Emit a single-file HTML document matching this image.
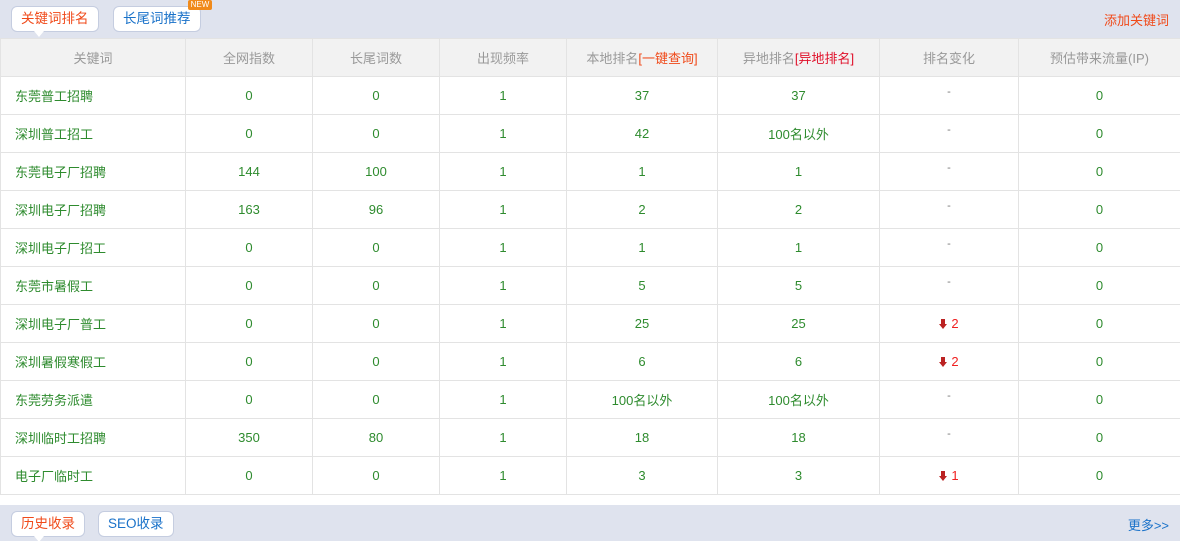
<!DOCTYPE html>
<html><head><meta charset="utf-8"><style>
*{margin:0;padding:0;box-sizing:border-box}
body{width:1180px;height:541px;background:#fff;font-family:"Liberation Sans","Noto Sans CJK SC",sans-serif;font-size:13px;position:relative;overflow:hidden}
.bar{position:absolute;left:0;width:1180px;background:#dfe3ee}
.tab{position:absolute;height:26px;line-height:24px;border:1px solid #c5cde0;border-radius:6px;background:#fff;padding:0 9px;font-size:13.5px}
.tab.on{color:#f04a1a}
.tab.on:after{content:"";position:absolute;left:22px;bottom:-6px;border-left:5px solid transparent;border-right:5px solid transparent;border-top:6px solid #fff}
.blue{color:#1a72c9}
table{position:absolute;left:0;top:38px;width:1180px;border-collapse:collapse;table-layout:fixed}
td,th{border:1px solid #e3e3e3;height:38px;text-align:center;color:#2e8b2e;font-weight:normal}
th{background:#f2f2f2;color:#999}
td:first-child{text-align:left;padding-left:14px}
.r{color:#f02020}
.ar{display:inline-block;position:relative;width:8px;height:10px;margin-right:4px;vertical-align:-1px}
.ar:before{content:"";position:absolute;left:2px;top:0;width:4px;height:5px;background:#b22}
.ar:after{content:"";position:absolute;left:0;top:5px;border-left:4px solid transparent;border-right:4px solid transparent;border-top:5px solid #b22}
.dash{color:#777;font-size:11px;vertical-align:top;padding-top:9px}
</style></head><body>
<div class="bar" style="top:0;height:38px"></div>
<div class="tab on" style="left:11px;top:6px">关键词排名</div>
<div class="tab blue" style="left:113px;top:6px">长尾词推荐</div>
<div style="position:absolute;left:188px;top:0;width:24px;height:10px;background:#f08a1a;color:#fff;font-size:8px;line-height:10px;text-align:center;border-radius:2px">NEW</div>
<div style="position:absolute;right:11px;top:10px;color:#f04a1a;font-size:13px">添加关键词</div>
<table>
<colgroup><col style="width:185px"><col style="width:127px"><col style="width:127px"><col style="width:127px"><col style="width:151px"><col style="width:162px"><col style="width:139px"><col style="width:162px"></colgroup>
<tr><th>关键词</th><th>全网指数</th><th>长尾词数</th><th>出现频率</th><th>本地排名<span style="color:#f04a1a">[一键查询]</span></th><th>异地排名<span style="color:#e0102a">[异地排名]</span></th><th>排名变化</th><th>预估带来流量(IP)</th></tr>
<tr><td>东莞普工招聘</td><td>0</td><td>0</td><td>1</td><td>37</td><td>37</td><td class="dash">-</td><td>0</td></tr>
<tr><td>深圳普工招工</td><td>0</td><td>0</td><td>1</td><td>42</td><td>100名以外</td><td class="dash">-</td><td>0</td></tr>
<tr><td>东莞电子厂招聘</td><td>144</td><td>100</td><td>1</td><td>1</td><td>1</td><td class="dash">-</td><td>0</td></tr>
<tr><td>深圳电子厂招聘</td><td>163</td><td>96</td><td>1</td><td>2</td><td>2</td><td class="dash">-</td><td>0</td></tr>
<tr><td>深圳电子厂招工</td><td>0</td><td>0</td><td>1</td><td>1</td><td>1</td><td class="dash">-</td><td>0</td></tr>
<tr><td>东莞市暑假工</td><td>0</td><td>0</td><td>1</td><td>5</td><td>5</td><td class="dash">-</td><td>0</td></tr>
<tr><td>深圳电子厂普工</td><td>0</td><td>0</td><td>1</td><td>25</td><td>25</td><td class="r"><span class="ar"></span>2</td><td>0</td></tr>
<tr><td>深圳暑假寒假工</td><td>0</td><td>0</td><td>1</td><td>6</td><td>6</td><td class="r"><span class="ar"></span>2</td><td>0</td></tr>
<tr><td>东莞劳务派遣</td><td>0</td><td>0</td><td>1</td><td>100名以外</td><td>100名以外</td><td class="dash">-</td><td>0</td></tr>
<tr><td>深圳临时工招聘</td><td>350</td><td>80</td><td>1</td><td>18</td><td>18</td><td class="dash">-</td><td>0</td></tr>
<tr><td>电子厂临时工</td><td>0</td><td>0</td><td>1</td><td>3</td><td>3</td><td class="r"><span class="ar"></span>1</td><td>0</td></tr>
</table>
<div class="bar" style="top:505px;height:36px"></div>
<div class="tab on" style="left:11px;top:511px">历史收录</div>
<div class="tab blue" style="left:98px;top:511px">SEO收录</div>
<div class="blue" style="position:absolute;right:11px;top:515px;font-size:13px">更多&gt;&gt;</div>
</body></html>
